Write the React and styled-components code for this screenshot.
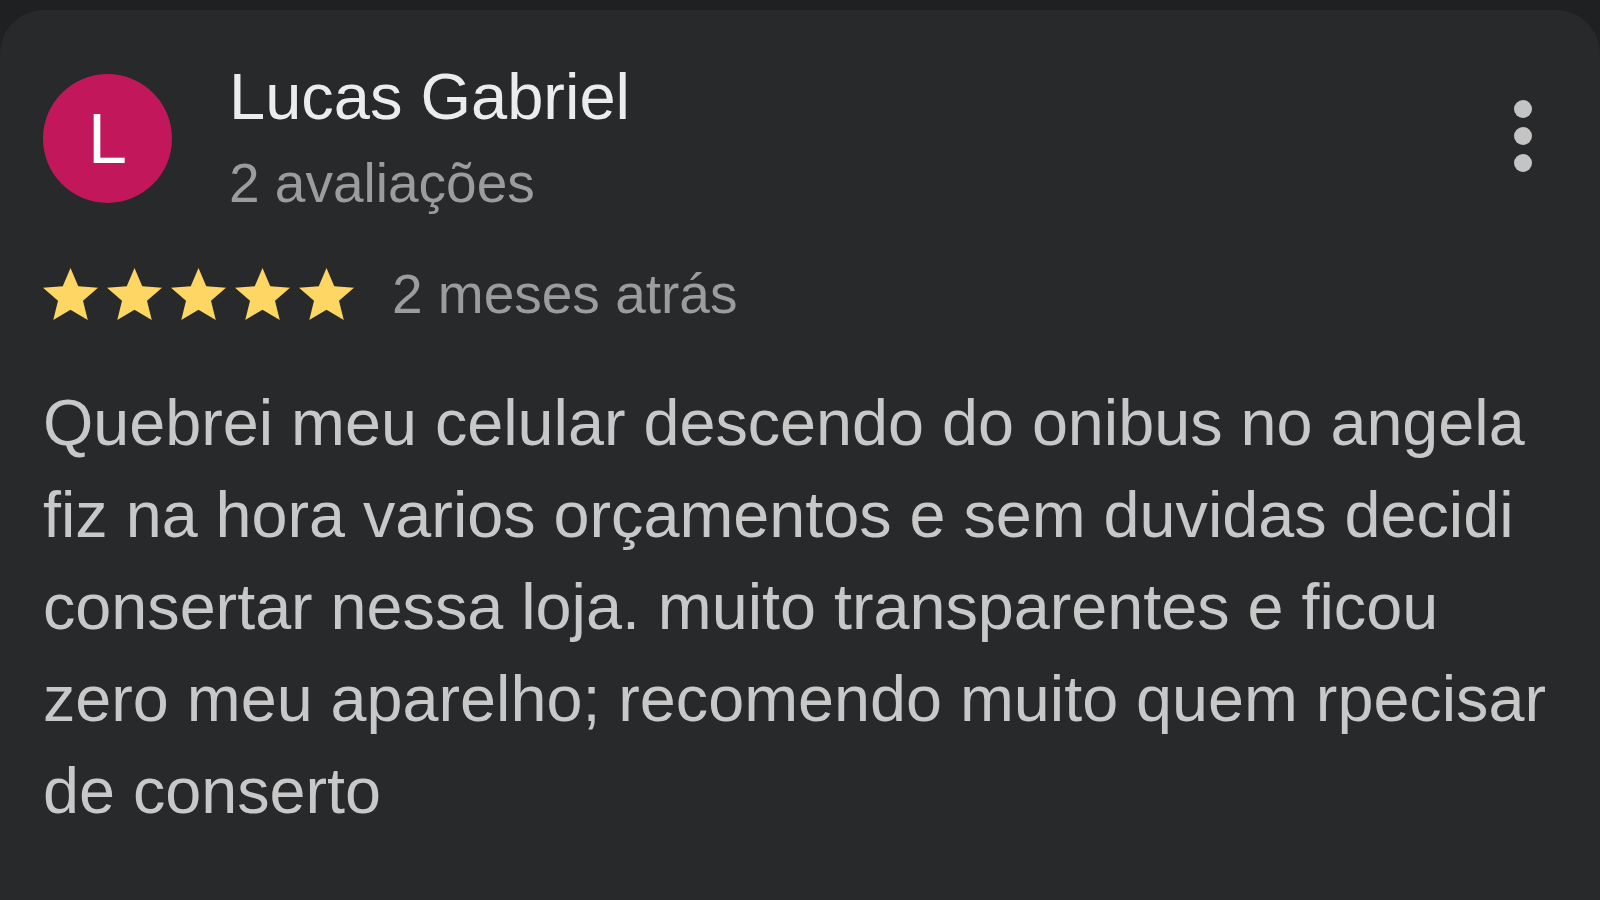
import React from 'react';
import styled, { createGlobalStyle } from 'styled-components';

const GlobalStyle = createGlobalStyle`
  html, body {
    margin: 0;
    padding: 0;
    background: #1f2021;
    height: 100%;
  }
  #root {
    height: 100%;
  }
`;

const Screen = styled.div`
  height: 100%;
  padding-top: 10px;
  box-sizing: border-box;
  overflow: hidden;
  font-family: 'Liberation Sans', Arial, sans-serif;
`;

const Card = styled.section`
  background: #28292b;
  border-radius: 44px 44px 0 0;
  height: 100%;
  box-sizing: border-box;
  padding: 49px 37px 0 43px;
`;

const Header = styled.div`
  display: flex;
  align-items: flex-start;
`;

const Avatar = styled.div`
  width: 129px;
  height: 129px;
  margin-top: 15px;
  border-radius: 50%;
  background: #c2185b;
  color: #ffffff;
  display: flex;
  align-items: center;
  justify-content: center;
  font-size: 70px;
  line-height: 1;
  flex-shrink: 0;
`;

const Author = styled.div`
  margin-left: 57px;
  flex: 1;
  display: flex;
  flex-direction: column;
  gap: 16px;
`;

const Name = styled.div`
  font-size: 65px;
  line-height: 76px;
  color: #ececec;
`;

const Meta = styled.div`
  font-size: 55px;
  line-height: 64px;
  color: #9b9c9e;
`;

const MoreButton = styled.button`
  background: none;
  border: 0;
  padding: 0;
  margin: 37px 28px 0 0;
  width: 24px;
  height: 80px;
  display: flex;
  cursor: pointer;
`;

const RatingRow = styled.div`
  display: flex;
  align-items: center;
  margin-top: 47px;
  gap: 38px;
`;

const Stars = styled.div`
  display: flex;
  gap: 9px;
`;

const Body = styled.p`
  margin: 51px 0 0;
  font-size: 64.7px;
  line-height: 92px;
  color: #c8c8c8;
`;

const Star = () => (
  <svg width="55" height="52" viewBox="1 0.6 22 20.8">
    <path
      d="M12 0.6l3.1 7.3 7.9 0.6-6 5.2 1.9 7.7L12 17.3 5.1 21.4 7 13.7 1 8.5l7.9-0.6z"
      fill="#fdd663"
    />
  </svg>
);

const review = {
  initial: 'L',
  name: 'Lucas Gabriel',
  count: '2 avaliações',
  stars: 5,
  when: '2 meses atrás',
  text:
    'Quebrei meu celular descendo do onibus no angela fiz na hora varios orçamentos e sem duvidas decidi consertar nessa loja. muito transparentes e ficou zero meu aparelho; recomendo muito quem rpecisar de conserto',
};

export default function App() {
  return (
    <>
      <GlobalStyle />
      <Screen>
        <Card>
          <Header>
            <Avatar>{review.initial}</Avatar>
            <Author>
              <Name>{review.name}</Name>
              <Meta>{review.count}</Meta>
            </Author>
            <MoreButton aria-label="Mais opções">
              <svg width="24" height="80" viewBox="0 0 24 80">
                <circle cx="12" cy="13" r="9" fill="#c4c4c4" />
                <circle cx="12" cy="40" r="9" fill="#c4c4c4" />
                <circle cx="12" cy="67" r="9" fill="#c4c4c4" />
              </svg>
            </MoreButton>
          </Header>
          <RatingRow>
            <Stars>
              {Array.from({ length: review.stars }).map((_, i) => (
                <Star key={i} />
              ))}
            </Stars>
            <Meta>{review.when}</Meta>
          </RatingRow>
          <Body>{review.text}</Body>
        </Card>
      </Screen>
    </>
  );
}
